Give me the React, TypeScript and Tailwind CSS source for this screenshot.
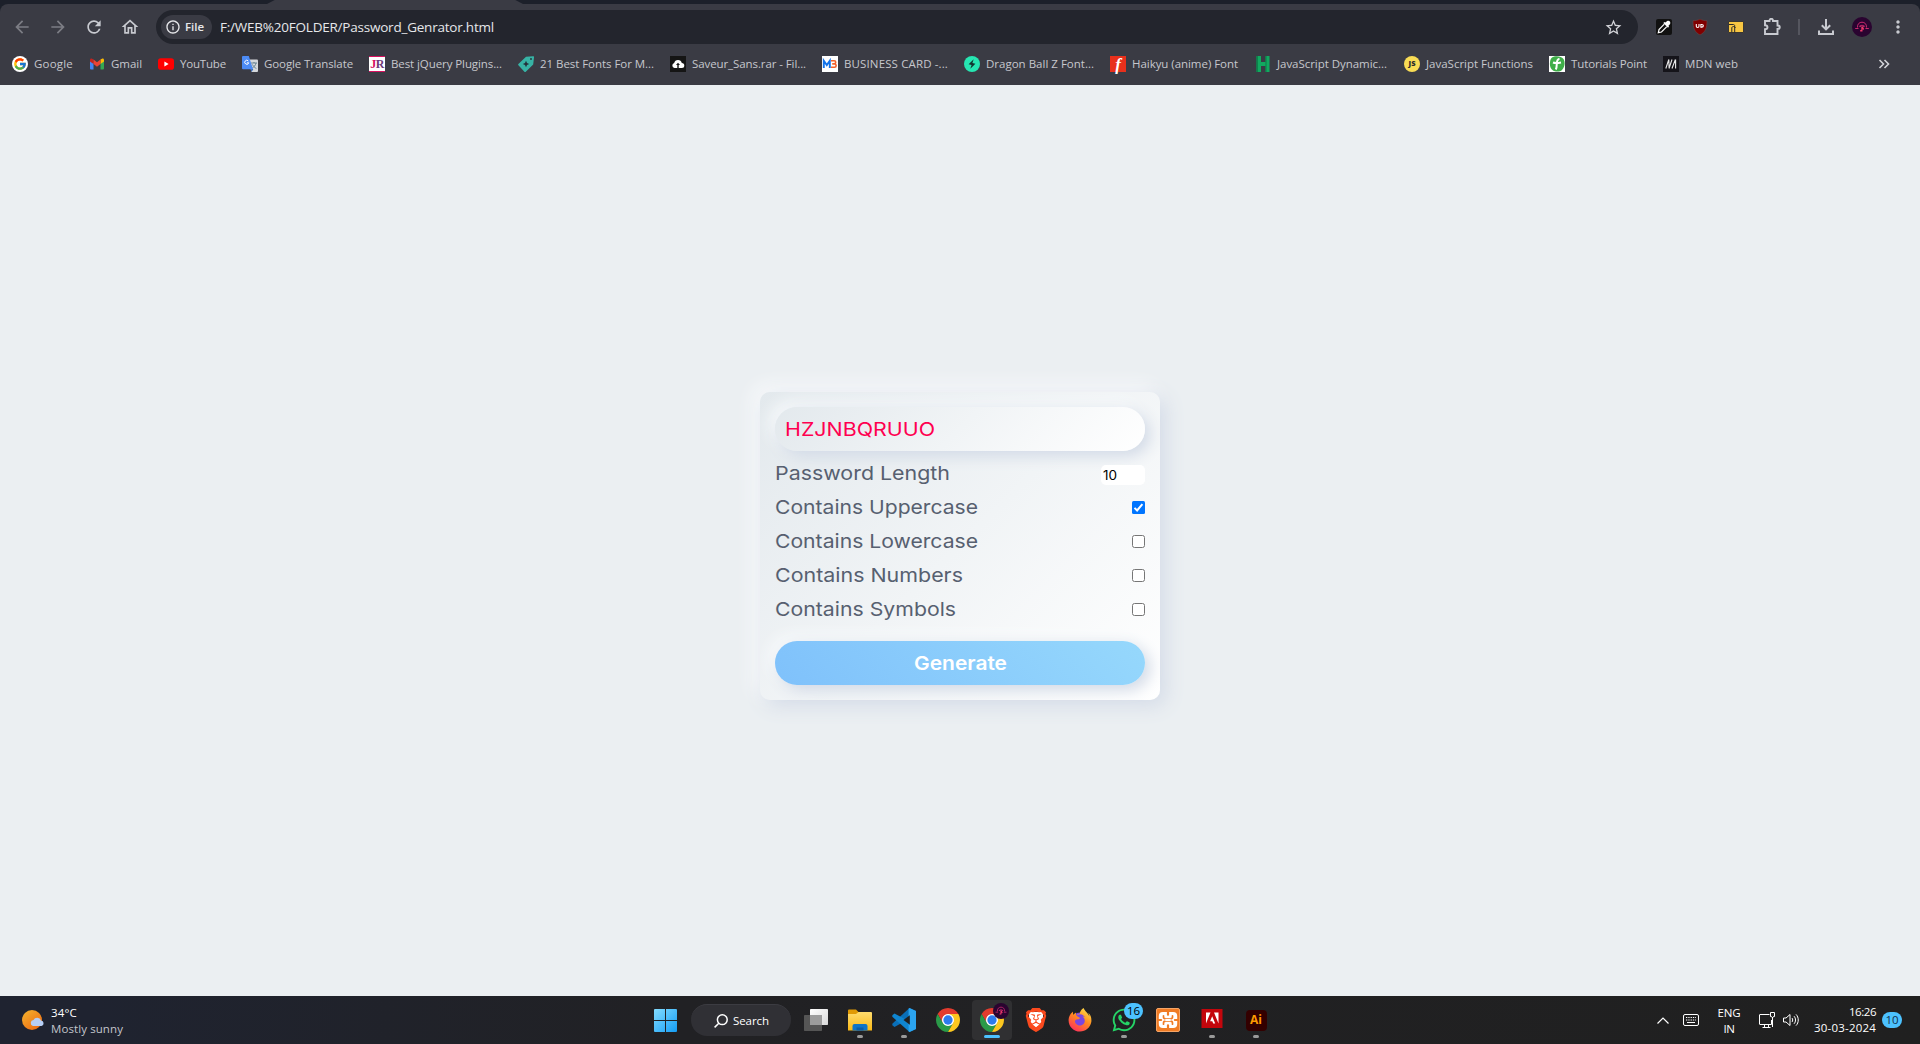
import { useLayoutEffect, useRef, useState, type ReactNode } from 'react'
import { FcGoogle } from 'react-icons/fc'
import { FaFirefoxBrowser, FaWhatsapp } from 'react-icons/fa'
import { SiBrave } from 'react-icons/si'
import {
  MdArrowBack, MdArrowForward, MdRefresh, MdOutlineHome, MdInfoOutline, MdStarBorder, MdMoreVert,
} from 'react-icons/md'

/* Text that fills an exact width, by letter spacing or by horizontal stretch. */
function Fit({ w, stretch = false, className = '', children }: { w: number; stretch?: boolean; className?: string; children: string }) {
  const ref = useRef<HTMLSpanElement>(null)
  const [natural, setNatural] = useState(0)
  useLayoutEffect(() => {
    if (ref.current) setNatural(ref.current.getBoundingClientRect().width)
  }, [])
  const style = !natural
    ? undefined
    : stretch
      ? { transform: `scaleX(${w / natural})` }
      : { letterSpacing: `${(w - natural) / children.length}px` }
  return (
    <span className={`block ${className}`} style={{ width: w }}>
      <span ref={ref} className="inline-block origin-left whitespace-nowrap" style={style}>{children}</span>
    </span>
  )
}

function Chrome({ className }: { className: string }) {
  return (
    <svg viewBox="0 0 48 48" className={className}>
      <circle cx="24" cy="24" r="13" fill="#fff" />
      <path fill="#e33b2e" d="M24 12H44.78A24 24 0 0 0 3.22 12L13.61 30A12 12 0 0 1 24 12Z" />
      <path fill="#2a9a48" d="M13.61 30L3.22 12A24 24 0 0 0 24 48L34.39 30A12 12 0 0 1 13.61 30Z" />
      <path fill="#fcc71f" d="M34.39 30L24 48A24 24 0 0 0 44.78 12H24A12 12 0 0 1 34.39 30Z" />
      <circle cx="24" cy="24" r="9.3" fill="#2d7bee" />
    </svg>
  )
}

function Avatar({ className }: { className: string }) {
  return (
    <svg viewBox="0 0 20 20" className={className}>
      <circle cx="10" cy="10" r="10" fill="#2a0430" />
      <g fill="none" stroke="#c9286f" strokeWidth="1">
        <path d="M5.500 10.500C5.200 7 7.400 5.200 10 5.200s4.800 1.800 4.500 5.300" />
        <path d="M3.200 11.500h3.300M13.500 11.500h3.300M7.500 10c.5-2.200 4.500-2.200 5 0M8 8.500l1 1.500M12 8.500l-1 1.500" />
      </g>
      <path d="M9.300 9.500h1.600l1.200 2.500-1 1-.6-1V14.500H8.200v-1.500h1.100z" fill="#f0386b" />
    </svg>
  )
}

const S = 'size-4 shrink-0'

const bookmarks: { label: string; w: number; slot: number; icon: ReactNode }[] = [
  { label: 'Google', w: 39, slot: 39, icon: <span className="flex size-4 shrink-0 items-center justify-center rounded-full bg-white"><FcGoogle size={14} /></span> },
  {
    label: 'Gmail', w: 31, slot: 31,
    icon: (
      <svg viewBox="0 0 16 16" className={S}>
        <path fill="#4285f4" d="M1 4.500L4.500 7v6.500H2a1 1 0 0 1-1-1z" />
        <path fill="#34a853" d="M15 4.500L11.500 7v6.500H14a1 1 0 0 0 1-1z" />
        <path fill="#fbbc04" d="M11.500 3.500L13 2.700c1-.6 2 0 2 1.300v1.500L11.500 8z" />
        <path fill="#c5221f" d="M4.500 3.500L3 2.700C2 2.100 1 2.700 1 4v1.500L4.500 8z" />
        <path fill="#ea4335" d="M4.500 3.500L8 6.200l3.500-2.700V8L8 10.700 4.500 8z" />
      </svg>
    ),
  },
  {
    label: 'YouTube', w: 46, slot: 46,
    icon: (
      <svg viewBox="0 0 16 16" className={S}>
        <rect y="2.300" width="16" height="11.400" rx="2.800" fill="#f00" />
        <path d="M6.400 5.600L10.600 8 6.400 10.400z" fill="#fff" />
      </svg>
    ),
  },
  {
    label: 'Google Translate', w: 89, slot: 89,
    icon: (
      <svg viewBox="0 0 16 16" className={S}>
        <path d="M6 3.500h9a1 1 0 0 1 1 1V15a1 1 0 0 1-1 1H9.500z" fill="#d5d8dc" />
        <path d="M9 7h6M12 6v1M14 7c-.5 2.500-2 4-3.800 5M10.500 8.500c.8 1.700 2 3 3.900 4" stroke="#5f7d8c" strokeWidth=".9" fill="none" />
        <path d="M9 13.200L11.300 13 9.500 16z" fill="#174ea6" />
        <path d="M1 0h5.800L11 13.200H1a1 1 0 0 1-1-1V1a1 1 0 0 1 1-1z" fill="#4c8bf5" />
        <path d="M6.300 5A2 2 0 1 0 6.700 6.800H4.900" stroke="#fff" strokeWidth="1" fill="none" />
      </svg>
    ),
  },
  {
    label: 'Best jQuery Plugins...', w: 111, slot: 111,
    icon: <span className="flex size-4 shrink-0 items-center justify-center border-y border-[#d8105f] bg-white font-['Liberation_Serif'] text-[12px] leading-none font-bold tracking-[-0.5px]"><span className="text-[#d8105f]">J</span><span className="text-[#6d3a78]">R</span></span>,
  },
  {
    label: '21 Best Fonts For M...', w: 114, slot: 114,
    icon: (
      <svg viewBox="0 0 16 16" className={S}>
        <path d="M8 .8L14.800.2A1 1 0 0 1 16 1.400L15.200 8.500 7.800 15.700a1 1 0 0 1-1.400 0L.4 9.300A1 1 0 0 1 .4 8z" fill="#37b3a5" />
        <path d="M8 4.800L9 7l2.200 1L9 9 8 11.200 7 9 4.800 8 7 7z" fill="#23303a" />
        <circle cx="13" cy="3" r=".9" fill="#23303a" />
      </svg>
    ),
  },
  {
    label: 'Saveur_Sans.rar - Fil...', w: 114, slot: 114,
    icon: (
      <svg viewBox="0 0 16 16" className={S}>
        <path d="M0 0h16v16H0z" fill="#151515" />
        <path d="M4.500 12a2.500 2.500 0 0 1-.3-4.900A3.900 3.900 0 0 1 11.800 7a2.500 2.500 0 0 1 0 5z" fill="#fff" />
        <path d="M8 6.800l2 2.200H8.700v3H7.300V9H6z" fill="#151515" />
      </svg>
    ),
  },
  {
    label: 'BUSINESS CARD -...', w: 104, slot: 104,
    icon: (
      <svg viewBox="0 0 16 16" className={S}>
        <path d="M0 0h16v16H0z" fill="#fff" />
        <path d="M1.800 12V4.800L4.800 9l3-4.200V12" fill="none" stroke="#1273eb" strokeWidth="1.900" />
        <path d="M9 4.700h3.200c2 0 2 3.200 0 3.200h-2 2.300c2.200 0 2.200 3.400 0 3.400H9" fill="none" stroke="#f4622b" strokeWidth="1.600" />
      </svg>
    ),
  },
  {
    label: 'Dragon Ball Z Font...', w: 108, slot: 108,
    icon: (
      <svg viewBox="0 0 16 16" className={S}>
        <circle cx="8" cy="8" r="8" fill="#26e6b2" />
        <path d="M9.700 3.200L4.600 8.300l3 .6-1.300 3.900 5.100-5.100-3-.6z" fill="#12352f" />
      </svg>
    ),
  },
  {
    label: 'Haikyu (anime) Font', w: 106, slot: 107,
    icon: <span className="flex size-4 shrink-0 items-center justify-center bg-[#e8301c] font-['Liberation_Serif'] text-[17px] leading-none font-bold text-white italic">f</span>,
  },
  {
    label: 'JavaScript Dynamic...', w: 110, slot: 111,
    icon: (
      <svg viewBox="0 0 16 16" className={S}>
        <path d="M1.500 0H6v6h4.500V0h4v16h-4v-6H6v6H1.500z" fill="#12a860" />
        <path d="M1.500 0h1.300v16H1.500zM10.500 0h1v16h-1z" fill="#0a7a46" />
      </svg>
    ),
  },
  {
    label: 'JavaScript Functions', w: 107, slot: 107,
    icon: <span className="flex size-4 shrink-0 items-center justify-center rounded-full bg-[#f8dc55] font-['Open_Sans'] text-[7.5px] leading-none font-extrabold text-[#2b2b2b]">JS</span>,
  },
  {
    label: 'Tutorials Point', w: 76, slot: 76,
    icon: (
      <svg viewBox="0 0 16 16" className={S}>
        <path d="M0 0h16v16H0z" fill="#fff" />
        <path d="M3 1.500C6-.5 12-.3 14.500 3c1.800 3 1.500 8-1.500 11-1.500 1.500-6 2.500-9 .5C1.500 12.500.5 10 1 6.500 1.200 4.500 1.500 2.500 3 1.500z" fill="#3fae49" />
        <path d="M4 6.500c2 .8 5 .6 8 0M10.500 2.800c-2 .3-2.800 3-2.800 6.200 0 2.500-.4 3.600-.9 4.500" stroke="#fff" strokeWidth="2" fill="none" />
      </svg>
    ),
  },
  {
    label: 'MDN web', w: 53, slot: 54,
    icon: (
      <svg viewBox="0 0 16 16" className={S}>
        <path d="M0 0h16v16H0z" fill="#15141a" />
        <path d="M2.800 12.500L5.800 3.500M6 12.500L9 3.500M9 12.500L12.400 3.500M12.600 3.500v9M5.800 3.500l.3 8.500" stroke="#e8e8e8" strokeWidth="1.100" fill="none" />
      </svg>
    ),
  },
]

function BrowserChrome() {
  return (
    <header className="h-[85px] bg-[#1c202a]">
      <div className="ml-[267px] h-1 w-[256px] bg-[#3a3b44] [clip-path:polygon(3%_0,97%_0,100%_100%,0_100%)]" />
      <div className="flex h-[81px] flex-col rounded-t-lg bg-[#3a3b44]">
        <div className="flex h-[46px] items-center">
          <div className="flex w-[156px] items-center gap-4 pl-3 text-[#c8cad0]">
            <MdArrowBack size={20} className="text-[#7c7d85]" />
            <MdArrowForward size={20} className="text-[#7c7d85]" />
            <MdRefresh size={20} />
            <MdOutlineHome size={20} />
          </div>
          <div className="flex h-[34px] w-[1482px] items-center rounded-full bg-[#23252d] pl-[5px]">
            <div className="flex h-6 w-[51px] items-center rounded-full bg-[#3a3b44] pl-1 text-[#e6e7ea]">
              <MdInfoOutline size={16} />
              <Fit w={19} className="ml-1 text-[11.5px] font-semibold">File</Fit>
            </div>
            <Fit w={274} className="ml-2 text-[13.5px] text-[#e6e7ea]">F:/WEB%20FOLDER/Password_Genrator.html</Fit>
            <MdStarBorder size={19} className="mr-[15px] ml-auto text-[#d2d3d8]" />
          </div>
          <div className="flex flex-1 items-center pl-[18px]">
            <svg viewBox="0 0 16 16" className={S}>
              <rect width="16" height="16" rx="2" fill="#111" />
              <path d="M8.300 5.200L3 10.500 2.300 13.700 5.500 13 10.800 7.700" stroke="#fff" strokeWidth="1.200" fill="none" />
              <path d="M7.300 4l4.700 4.700 1-1.200-.5-.8 1.600-1.800c1-1.900-1-3.900-2.900-2.900L9.400 3.500 8.500 3z" fill="#fff" />
            </svg>
            <svg viewBox="0 0 16 16" className="ml-5 size-4">
              <path d="M8 0c2 1.300 4.500 1.700 7 1.700C15 9 13.500 13 8 16 2.500 13 1 9 1 1.700 3.500 1.700 6 1.300 8 0z" fill="#800000" stroke="#6b5050" strokeWidth=".5" />
              <path d="M4.300 5v2.200c0 1.700 2.700 1.700 2.700 0V5M8.900 5.500v2.600h.8c2.200 0 2.200-2.600 0-2.600z" stroke="#fff" strokeWidth="1.100" fill="none" />
            </svg>
            <svg viewBox="0 0 16 16" className="ml-5 size-4">
              <rect x=".5" y="2.500" width="15" height="11" rx=".5" fill="#f8c642" stroke="#23252d" strokeWidth=".8" />
              <path d="M1 5.500h4.500c.8 0 1.200.6 1.200 1.500v6.500M3.800 13.500V9c0-2 3.500-2 3.500 0" stroke="#2b2b2b" strokeWidth="1" fill="none" />
            </svg>
            <svg viewBox="0 0 18 18" className="ml-[19px] size-[18px] fill-none stroke-[#c8cad0] stroke-[1.900]">
              <path d="M2 3h4.500C6.500 0 10 0 10 3h4.500v4.500c3 0 3 3.500 0 3.500v5H2v-4.800c3.300 0 3.300-3.900 0-3.900z" />
            </svg>
            <div className="ml-[17px] h-4 w-0.5 bg-[#55565f]" />
            <svg viewBox="0 0 16 16" className="ml-[18px] size-4 fill-none stroke-[#c8cad0] stroke-2">
              <path d="M8 0v10M3.800 6.200L8 10.400l4.200-4.200M1 11.500V15h14v-3.500" />
            </svg>
            <Avatar className="ml-[18px] size-5" />
            <MdMoreVert size={20} className="ml-4 text-[#c8cad0]" />
          </div>
        </div>
        <div className="flex h-[28px] items-center pl-3 text-[11.5px] text-[#c6c7cd]">
          <div className="flex gap-4">
            {bookmarks.map((b) => (
              <div key={b.label} className="flex items-center gap-1.5">
                {b.icon}
                <div className="h-4 leading-4" style={{ width: b.slot }}>
                  <Fit w={b.w}>{b.label}</Fit>
                </div>
              </div>
            ))}
          </div>
          <svg viewBox="0 0 12 10" className="mr-[30px] ml-auto h-2.5 w-3 fill-none stroke-[#d2d3d8] stroke-[1.6]">
            <path d="M1.500 1l4 4-4 4M6.500 1l4 4-4 4" />
          </svg>
        </div>
      </div>
    </header>
  )
}

const options = [
  { label: 'Contains Uppercase', w: 203, on: true },
  { label: 'Contains Lowercase', w: 203, on: false },
  { label: 'Contains Numbers', w: 188, on: false },
  { label: 'Contains Symbols', w: 181, on: false },
]

function Generator() {
  return (
    <div className="flex h-[308px] w-[400px] flex-col rounded-[10px] bg-linear-[135deg,#e3e9ed,#ffffff] p-[15px] font-['Inter',sans-serif] text-[19px] font-[430] shadow-[5px_5px_20px_#d1d9e6,-5px_-5px_20px_#ffffff]">
      <div className="flex h-11 shrink-0 items-center rounded-full bg-linear-[135deg,#e3e9ed,#ffffff] pt-0.5 pl-[10px] text-[#ff0050] shadow-[5px_5px_15px_#d1d9e6,-5px_-5px_15px_#f9fbfc]">
        <Fit w={150} stretch>HZJNBQRUUO</Fit>
      </div>
      <div className="mt-[5px] flex h-[170px] flex-col text-[#576070]">
        <div className="flex h-[34px] items-center justify-between">
          <Fit w={175} stretch className="pt-0.5">Password Length</Fit>
          <div className="mt-1 flex h-5 w-11 items-center rounded-[5px] bg-white pt-0.5 pl-0.5 text-[12.5px] font-normal text-black">
            <Fit w={14} stretch>10</Fit>
          </div>
        </div>
        {options.map((o) => (
          <div key={o.label} className="flex h-[34px] items-center justify-between">
            <Fit w={o.w} stretch className="pt-0.5">{o.label}</Fit>
            {o.on ? (
              <svg viewBox="0 0 13 13" className="mt-px size-[13px]">
                <rect width="13" height="13" rx="1.500" fill="#0075ff" />
                <path d="M2.500 6.900l2.600 2.600 5.300-6.300" stroke="#fff" strokeWidth="2" fill="none" />
              </svg>
            ) : (
              <span className="mt-px size-[13px] rounded-[2.5px] border border-[#767676] bg-white" />
            )}
          </div>
        ))}
      </div>
      <div className="mt-[15px] flex h-11 shrink-0 items-center justify-center rounded-full bg-linear-[45deg,#7fc1fb,#96d8fc] pt-0.5 text-white shadow-[5px_5px_15px_#d1d9e6,-5px_-5px_15px_#f9fbfc]">
        <Fit w={93} stretch className="font-[560]">Generate</Fit>
      </div>
    </div>
  )
}

function Firefox() {
  return (
    <svg viewBox="0 0 24 24" className="size-6">
      <defs>
        <linearGradient id="flame" x1=".8" y1="0" x2=".2" y2="1">
          <stop offset="0" stopColor="#ffe14a" />
          <stop offset=".45" stopColor="#ff8a1f" />
          <stop offset="1" stopColor="#ff2a5f" />
        </linearGradient>
      </defs>
      <circle cx="12" cy="12.500" r="8" fill="#7a45e0" />
      <FaFirefoxBrowser size={24} fill="url(#flame)" />
    </svg>
  )
}

const apps: { name: string; icon: ReactNode; mark?: 'dot' | 'bar' }[] = [
  {
    name: 'Task view',
    icon: (
      <svg viewBox="0 0 24 24" className="size-6">
        <defs><linearGradient id="tv" x2="1" y2="1"><stop stopColor="#fff" /><stop offset="1" stopColor="#d8d8d8" /></linearGradient></defs>
        <rect x="6" y="1" width="18" height="16" rx=".7" fill="url(#tv)" />
        <rect x="0" y="7" width="18" height="16" rx=".7" fill="#555" />
        <rect x="6" y="7" width="12" height="10" fill="#9c9c9c" />
      </svg>
    ),
  },
  {
    name: 'Explorer', mark: 'dot',
    icon: (
      <svg viewBox="0 0 24 24" className="size-6">
        <defs><linearGradient id="fold" x2="0" y2="1"><stop stopColor="#ffdc6e" /><stop offset="1" stopColor="#fbb915" /></linearGradient></defs>
        <path d="M0 2.500a1 1 0 0 1 1-1h7l3 3v4H0z" fill="#e09a05" />
        <path d="M0 6h8l2.500-2H23a1 1 0 0 1 1 1v17.500H0z" fill="url(#fold)" />
        <path d="M4.500 22.500V18a2 2 0 0 1 2-2h11a2 2 0 0 1 2 2v4.500z" fill="#0f74c8" />
        <path d="M8.500 19.500h7v3h-7z" fill="#0b5ca6" />
      </svg>
    ),
  },
  {
    name: 'Code', mark: 'dot',
    icon: (
      <svg viewBox="0 0 24 24" className="size-6">
        <path d="M17.500 0L24 3v4L2.500 19 .3 17.200v-1.500z" fill="#0a6fb8" />
        <path d="M17.500 24L24 21v-4L2.500 5.500.3 7.200v1.500z" fill="#0f85d0" />
        <path d="M17.500 0L24 3v18l-6.500 3-.9-.5V.5z" fill="#2ba4f0" />
        <path d="M17.800 7.200v9.600L11.500 12z" fill="#202020" />
      </svg>
    ),
  },
  { name: 'Chrome', icon: <Chrome className="size-6" /> },
  {
    name: 'Chrome profile', mark: 'bar',
    icon: (
      <>
        <Chrome className="size-6" />
        <Avatar className="absolute top-[3px] left-[21px] size-4" />
      </>
    ),
  },
  {
    name: 'Brave',
    icon: (
      <span className="relative flex size-6 items-center justify-center">
        <span className="absolute top-1 h-4 w-3.5 rounded-b-full bg-white" />
        <SiBrave size={24} className="relative text-[#fb4a1e]" />
      </span>
    ),
  },
  { name: 'Firefox', icon: <Firefox /> },
  {
    name: 'WhatsApp', mark: 'dot',
    icon: (
      <>
        <FaWhatsapp size={26} className="text-[#25d366]" />
        <span className="absolute top-[3px] left-5 flex h-4 w-[19px] items-center justify-center rounded-full bg-[#4cc2ff] text-[11.5px] leading-none text-black">16</span>
      </>
    ),
  },
  {
    name: 'XAMPP',
    icon: (
      <svg viewBox="0 0 24 24" className="size-6">
        <rect x=".5" y=".5" width="23" height="23" rx="1.500" fill="#f07c25" stroke="#f6a566" />
        <rect x="2.800" y="4" width="18.400" height="16" rx="4" fill="#fff" />
        <path d="M12 3.500v3.200M12 17.300v3.200M2.500 12h2.600M18.900 12h2.600" stroke="#f07c25" strokeWidth="2.200" strokeLinecap="round" />
        <path d="M7.500 7.800v1.400c0 1.500 1.200 1.600 2.400 1.600h4.200c1.200 0 2.400-.1 2.400-1.600V7.800M7.500 16.200v-1.400c0-1.500 1.200-1.600 2.400-1.600h4.200c1.200 0 2.400.1 2.400 1.600v1.400" fill="none" stroke="#f07c25" strokeWidth="1.700" strokeLinecap="round" />
        <rect x="9.300" y="10.800" width="5.400" height="2.400" fill="#fff" />
      </svg>
    ),
  },
  {
    name: 'Acrobat', mark: 'dot',
    icon: (
      <svg viewBox="0 0 24 24" className="-mt-1 size-6">
        <path d="M1.500 3h21v19h-21z" fill="#c4060c" />
        <path d="M6 6.500h4.500L6 17.500zM18.500 6.500H14l4.500 11zM12.200 10.300l3 7.200h-2l-.9-2.300h-2.200z" fill="#fff" />
      </svg>
    ),
  },
  {
    name: 'Illustrator', mark: 'dot',
    icon: <span className="flex size-[21px] items-center justify-center rounded bg-[#330000] text-[12px] font-bold text-[#ff9a00]">Ai</span>,
  },
]

function Taskbar() {
  return (
    <footer className="flex h-12 items-stretch bg-linear-to-r from-[#1f2330] from-5% via-[#212124] via-35% to-[#202020] text-white">
      <div className="flex w-[654px] items-center pl-[21px]">
        <svg viewBox="0 0 24 24" className="size-6">
          <defs><linearGradient id="sun" x2=".8" y2="1"><stop stopColor="#f5b52e" /><stop offset="1" stopColor="#ec6a13" /></linearGradient></defs>
          <circle cx="11" cy="12" r="10" fill="url(#sun)" />
          <path d="M12 18a3 3 0 0 1 .5-5.900A4 4 0 0 1 20 12.500a2.800 2.800 0 0 1 .5 5.500z" fill="#b7cff5" />
        </svg>
        <div className="ml-1.5 pt-0.5 text-[11.5px] leading-4">
          <Fit w={26}>34°C</Fit>
          <Fit w={72} className="text-[#c3c5cb]">Mostly sunny</Fit>
        </div>
      </div>
      <div className="flex items-center">
        <svg viewBox="0 0 23 23" className="size-[23px]">
          <defs><linearGradient id="win" x2="1" y2="1"><stop stopColor="#83dcff" /><stop offset="1" stopColor="#149df5" /></linearGradient></defs>
          <path d="M0 1a1 1 0 0 1 1-1h10v11H0zM12 0h10a1 1 0 0 1 1 1v10H12zM0 12h11v11H1a1 1 0 0 1-1-1zM12 12h11v10a1 1 0 0 1-1 1H12z" fill="url(#win)" />
        </svg>
        <div className="ml-3.5 flex h-8 w-[100px] items-center rounded-full border-t border-[#3c3c42] bg-[#303035] pl-[23px]">
          <svg viewBox="0 0 14 14" className="size-3.5 fill-none stroke-white stroke-[1.5]">
            <circle cx="8.300" cy="5.700" r="4.900" />
            <path d="M4.800 9.200L.6 13.400" />
          </svg>
          <Fit w={36} className="ml-[5px] text-[11.5px]">Search</Fit>
        </div>
      </div>
      <div className="ml-[5px] flex items-center gap-1">
        {apps.map((a) => (
          <div key={a.name} className={`relative flex size-10 items-center justify-center rounded ${a.mark === 'bar' ? 'bg-[#303032]' : ''}`}>
            {a.icon}
            {a.mark === 'dot' && <span className="absolute bottom-0.5 h-[3px] w-1.5 rounded-full bg-[#9a9a9a]" />}
            {a.mark === 'bar' && <span className="absolute bottom-0.5 h-[3px] w-4 rounded-full bg-[#4cc2ff]" />}
          </div>
        ))}
      </div>
      <div className="ml-auto flex items-center pr-[18px] text-[11.5px] leading-4">
        <svg viewBox="0 0 12 7" className="h-[7px] w-3 fill-none stroke-white stroke-[1.2]"><path d="M.5 6.500l5.500-5.500 5.500 5.500" /></svg>
        <svg viewBox="0 0 16 12" className="ml-3.5 h-3 w-4 fill-none stroke-white">
          <rect x=".5" y=".5" width="15" height="11" rx="1.500" />
          <path d="M3 3.500h10M3 6h10" strokeDasharray="1.300 1" />
          <path d="M4 8.500h8" />
        </svg>
        <div className="ml-[18px] flex w-[24px] flex-col items-center pt-0.5">
          <Fit w={23}>ENG</Fit>
          <Fit w={11}>IN</Fit>
        </div>
        <svg viewBox="0 0 16 16" className="ml-[18px] size-4 fill-none stroke-white">
          <path d="M10.500 2.500H1a.5.5 0 0 0-.5.5v9a.5.5 0 0 0 .5.5h11.500V8M5.500 12.500v3M9.500 12.500v3M3.500 15.500h8M11.500.5h4v4h-1l-.5 1h-1l-.5-1h-1zM13.500 5.500V15" />
        </svg>
        <svg viewBox="0 0 16 14" className="ml-2 h-3.5 w-4 fill-none stroke-white">
          <path d="M.5 5v4h2.500L7 12.500v-11L3 5zM9 5c.9 1 .9 3 0 4M11 3.200c2 2 2 5.600 0 7.600M13 1.400c3 3 3 8.200 0 11.200" />
        </svg>
        <div className="ml-[15px] flex w-[62px] flex-col items-end">
          <Fit w={27}>16:26</Fit>
          <Fit w={62}>30-03-2024</Fit>
        </div>
        <span className="ml-1.5 flex h-4 w-5 items-center justify-center rounded-full bg-[#4cc2ff] text-[11.5px] text-[#10304a]">10</span>
      </div>
    </footer>
  )
}

export default function App() {
  return (
    <div className="flex h-[1044px] w-[1920px] flex-col overflow-hidden bg-[#ebeff2] font-['Open_Sans',sans-serif]">
      <BrowserChrome />
      <main className="flex flex-1 items-start justify-center pt-[307px]">
        <Generator />
      </main>
      <Taskbar />
    </div>
  )
}
